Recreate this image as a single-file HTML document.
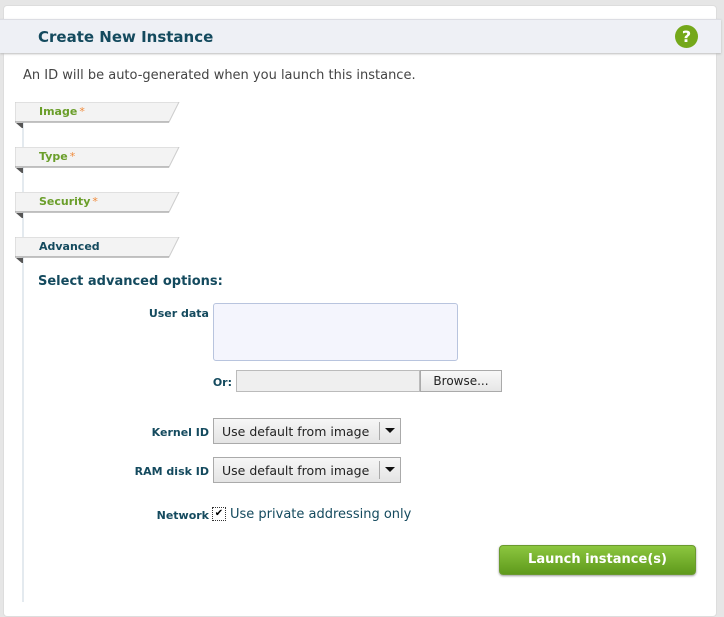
<!DOCTYPE html>
<html><head><style>
body{margin:0;width:724px;height:599px;background:#e6e6e6;font-family:"DejaVu Sans","Liberation Sans",sans-serif;position:relative;overflow:hidden}
.panel{position:absolute;left:3px;top:5px;width:712px;height:610px;background:#fff;border-radius:4px;border:1px solid #ddd}
.hdr{position:absolute;left:0;top:19px;width:721px;height:33px;background:#eef0f5;border-top:1px solid #dcdde3;box-shadow:0 1px 2px #bbb}
.hdr h1{margin:0;position:absolute;left:38px;top:8px;font-size:15px;font-weight:bold;color:#144a5e}
.help{position:absolute;left:675px;top:25px;width:23px;height:23px;border-radius:50%;background:#74a81a;color:#fff;font-weight:bold;font-size:16px;text-align:center;line-height:23px}
.intro{position:absolute;left:23px;top:68px;font-size:13px;color:#444}
.vline{position:absolute;left:22px;top:122px;width:2px;height:480px;background:#e4eaef}
.tab{position:absolute;left:15px;width:165px;height:21px}
.tab svg{position:absolute;left:0;top:0}
.tab span{position:absolute;left:24px;top:3px;font-size:11px;font-weight:bold;color:#6a9e2a}
.tab span i{font-style:normal;color:#f08a3a;font-weight:normal;margin-left:2px}
.lbl{position:absolute;font-size:11px;font-weight:bold;color:#144a5e;text-align:right}
.sel{position:absolute;left:213px;width:188px;height:26px;border:1px solid #aaa;background:linear-gradient(#f6f6f6,#e4e4e4);font-size:12.5px;color:#222;box-sizing:border-box}
.sel span{position:absolute;left:8px;top:5px}
.sel b{position:absolute;right:0;top:3px;width:20px;height:18px;border-left:1px solid #aaa}
.sel b:after{content:"";position:absolute;left:5px;top:6px;border:5px solid transparent;border-top:5px solid #111;border-bottom:0}
</style></head><body>
<div class="panel"></div>
<div class="hdr"><h1>Create New Instance</h1></div>
<div class="help">?</div>
<div class="intro">An ID will be auto-generated when you launch this instance.</div>
<div class="vline"></div>

<div class="tab" style="top:102px"><svg width="166" height="26"><path d="M0 0H164L154 20H0Z" fill="#f3f3f3" stroke="#ccc"/><path d="M0 20H154" stroke="#888"/><path d="M1 21H8L8 27Z" fill="#555"/></svg><span>Image<i>*</i></span></div>
<div class="tab" style="top:147px"><svg width="166" height="26"><path d="M0 0H164L154 20H0Z" fill="#f3f3f3" stroke="#ccc"/><path d="M0 20H154" stroke="#888"/><path d="M1 21H8L8 27Z" fill="#555"/></svg><span>Type<i>*</i></span></div>
<div class="tab" style="top:192px"><svg width="166" height="26"><path d="M0 0H164L154 20H0Z" fill="#f3f3f3" stroke="#ccc"/><path d="M0 20H154" stroke="#888"/><path d="M1 21H8L8 27Z" fill="#555"/></svg><span>Security<i>*</i></span></div>
<div class="tab" style="top:237px"><svg width="166" height="26"><path d="M0 0H164L154 20H0Z" fill="#f3f3f3" stroke="#ccc"/><path d="M0 20H154" stroke="#888"/><path d="M1 21H8L8 27Z" fill="#555"/></svg><span style="color:#144a5e">Advanced</span></div>

<div style="position:absolute;left:38px;top:274px;font-size:13px;font-weight:bold;color:#144a5e">Select advanced options:</div>

<div class="lbl" style="left:100px;width:109px;top:307px">User data</div>
<div style="position:absolute;left:213px;top:303px;width:243px;height:56px;border:1px solid #b8c4de;border-radius:3px;background:#f4f5fd"></div>
<div class="lbl" style="left:180px;width:52px;top:376px">Or:</div>
<div style="position:absolute;left:236px;top:370px;width:182px;height:20px;border:1px solid #bbb;background:#efefef"></div>
<div style="position:absolute;left:420px;top:370px;width:80px;height:20px;border:1px solid #aaa;background:linear-gradient(#f8f8f8,#e6e6e6);font-size:12px;color:#222;text-align:center;line-height:20px">Browse...</div>

<div class="lbl" style="left:100px;width:109px;top:426px">Kernel ID</div>
<div class="sel" style="top:418px"><span>Use default from image</span><b></b></div>
<div class="lbl" style="left:100px;width:109px;top:465px">RAM disk ID</div>
<div class="sel" style="top:457px"><span>Use default from image</span><b></b></div>

<div class="lbl" style="left:100px;width:109px;top:509px">Network</div>
<div style="position:absolute;left:212px;top:507px;width:12px;height:12px;border:1px dotted #333;background:#fff;font-size:10px;line-height:12px;text-align:center">✔</div>
<div style="position:absolute;left:230px;top:507px;font-size:13px;color:#144a5e">Use private addressing only</div>

<div style="position:absolute;left:499px;top:545px;width:195px;height:28px;border-radius:4px;background:linear-gradient(#8cc63f,#5f9a1c);border:1px solid #6a9a2e;box-shadow:0 1px 2px #999;color:#fff;font-weight:bold;font-size:13px;text-align:center;line-height:27px">Launch instance(s)</div>
</body></html>
